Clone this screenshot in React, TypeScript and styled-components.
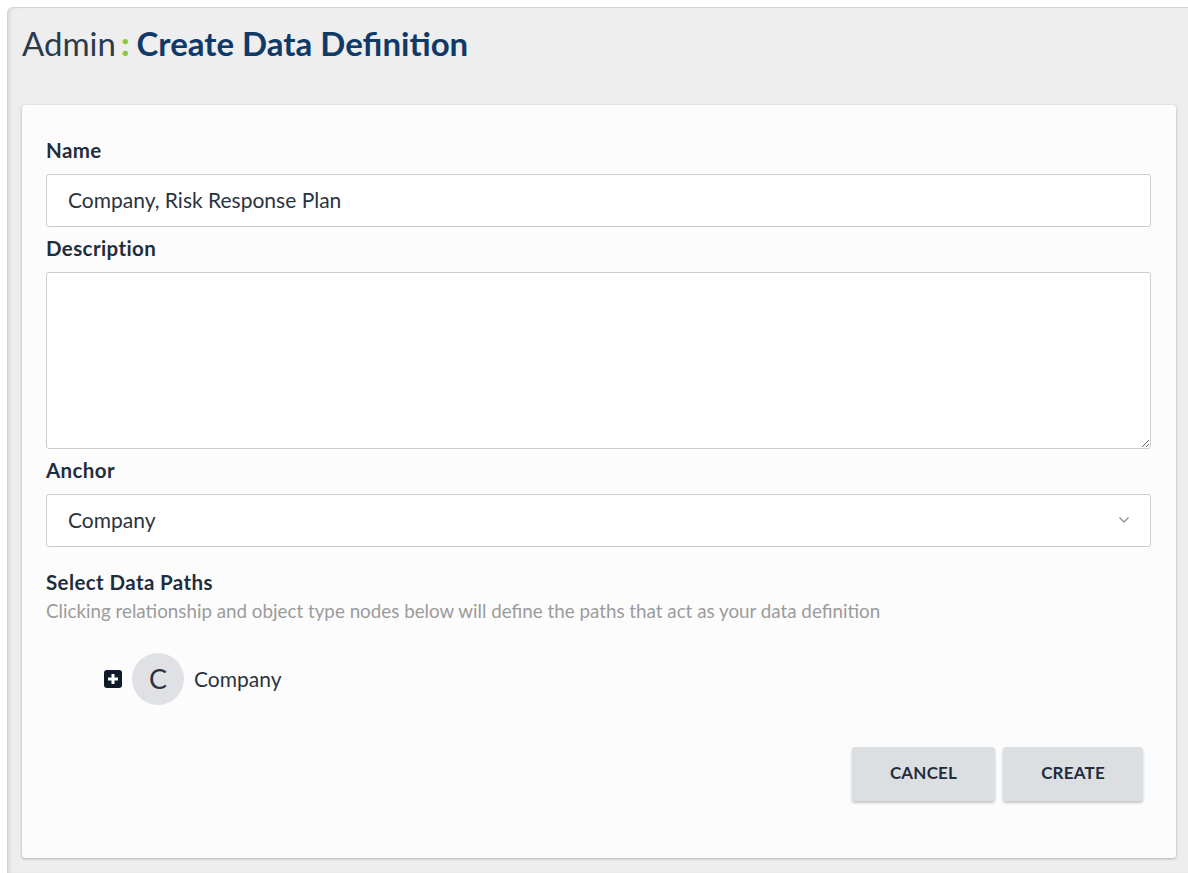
import React from "react";
import styled, { createGlobalStyle } from "styled-components";

const GlobalStyle = createGlobalStyle`
  html, body {
    margin: 0;
    padding: 0;
    background: #ffffff;
  }
  body {
    font-family: Lato, "Open Sans", sans-serif;
    color: #1f2d3d;
  }
  * {
    box-sizing: border-box;
  }
`;

const Page = styled.div`
  padding: 7px 0 0 7px;
  height: 873px;
  overflow: hidden;
`;

const Frame = styled.div`
  background: #eeeeee;
  border-top: 1px solid #d4d4d4;
  border-left: 1px solid #d4d4d4;
  border-top-left-radius: 6px;
  box-shadow: inset 3px 0 4px -2px rgba(0, 0, 0, 0.12);
  padding: 0 11px 0 14px;
  height: 100%;
`;

const Title = styled.h1`
  margin: 0;
  padding: 15px 0 0 0;
  height: 97px;
  font-size: 33px;
  font-weight: 400;
  line-height: 40px;
  letter-spacing: 0;
  white-space: nowrap;
`;

const Crumb = styled.span`
  color: #2b3b4e;
`;

const Colon = styled.span`
  color: #8cc63f;
  font-weight: 900;
  margin: 0 7px 0 5px;
`;

const Heading = styled.span`
  color: #0f3a68;
  font-weight: 700;
`;

const Card = styled.div`
  background: #fcfcfc;
  border-radius: 3px;
  box-shadow: 0 1px 3px rgba(0, 0, 0, 0.25), 0 0 1px rgba(0, 0, 0, 0.15);
  padding: 34px 25px 57px 24px;
  width: 1154px;
`;

const Label = styled.div<{ $gap?: number }>`
  font-size: 20.5px;
  font-weight: 700;
  color: #1f2d3d;
  line-height: 22px;
  letter-spacing: 0.4px;
  margin-top: ${(p) => p.$gap ?? 0}px;
  margin-bottom: 13px;
`;

const Field = styled.div`
  margin-bottom: 10px;
`;

const TextInput = styled.div`
  height: 53px;
  border: 1px solid #c9ccd0;
  border-radius: 3px;
  background: #ffffff;
  display: flex;
  align-items: center;
  padding: 0 21px 3px;
  font-size: 21px;
  color: #2b3340;
`;

const TextArea = styled.textarea`
  display: block;
  width: 100%;
  height: 177px;
  border: 1px solid #c9ccd0;
  border-radius: 3px;
  background: #ffffff;
  resize: vertical;
  font-family: inherit;
  margin: 0;
`;

const SelectBox = styled(TextInput)`
  justify-content: space-between;
  padding-right: 20px;
  padding-bottom: 2px;
`;

const Help = styled.div`
  font-size: 18.8px;
  color: #9b9b9b;
  line-height: 20px;
  margin-top: -5px;
  white-space: nowrap;
`;

const Tree = styled.div`
  display: flex;
  align-items: center;
  padding: 32px 0 0 58px;
`;

const Node = styled.div`
  width: 52px;
  height: 52px;
  border-radius: 50%;
  background: #dfe1e4;
  display: flex;
  align-items: center;
  justify-content: center;
  font-size: 27px;
  color: #2b3340;
  margin: 0 10px 0 10px;
  padding-bottom: 2px;
`;

const NodeName = styled.span`
  font-size: 21px;
  color: #2b3340;
  padding-bottom: 2px;
`;

const Actions = styled.div`
  display: flex;
  justify-content: flex-end;
  gap: 8px;
  padding: 42px 8px 0 0;
`;

const Button = styled.button<{ $w: number }>`
  width: ${(p) => p.$w}px;
  height: 54px;
  border: none;
  border-radius: 3px;
  background: #dcdfe2;
  box-shadow: 0 2px 3px rgba(0, 0, 0, 0.22);
  font-family: inherit;
  font-size: 17px;
  font-weight: 700;
  color: #1f2d3d;
  letter-spacing: 0.2px;
  padding: 0 0 3px;
`;

const PlusIcon = () => (
  <svg width="18" height="18" viewBox="0 0 18 18">
    <rect x="0" y="0" width="18" height="18" rx="3" fill="#0f1a2b" />
    <path d="M9 4v10M4 9h10" stroke="#fff" strokeWidth="3" />
  </svg>
);

const Chevron = () => (
  <svg width="12" height="8" viewBox="0 0 12 8">
    <path d="M1.5 1.5l4.5 4.5 4.5-4.5" stroke="#8a95a3" strokeWidth="1.4" fill="none" />
  </svg>
);

export default function App() {
  return (
    <>
      <GlobalStyle />
      <Page>
        <Frame>
          <Title>
            <Crumb>Admin</Crumb>
            <Colon>:</Colon>
            <Heading>Create Data Definition</Heading>
          </Title>
          <Card>
            <Field>
              <Label>Name</Label>
              <TextInput>Company, Risk Response Plan</TextInput>
            </Field>
            <Field>
              <Label>Description</Label>
              <TextArea />
            </Field>
            <Field>
              <Label>Anchor</Label>
              <SelectBox>
                <span>Company</span>
                <Chevron />
              </SelectBox>
            </Field>
            <Label $gap={24}>Select Data Paths</Label>
            <Help>
              Clicking relationship and object type nodes below will define the paths that act as your data definition
            </Help>
            <Tree>
              <PlusIcon />
              <Node>C</Node>
              <NodeName>Company</NodeName>
            </Tree>
            <Actions>
              <Button $w={143}>CANCEL</Button>
              <Button $w={140}>CREATE</Button>
            </Actions>
          </Card>
        </Frame>
      </Page>
    </>
  );
}
